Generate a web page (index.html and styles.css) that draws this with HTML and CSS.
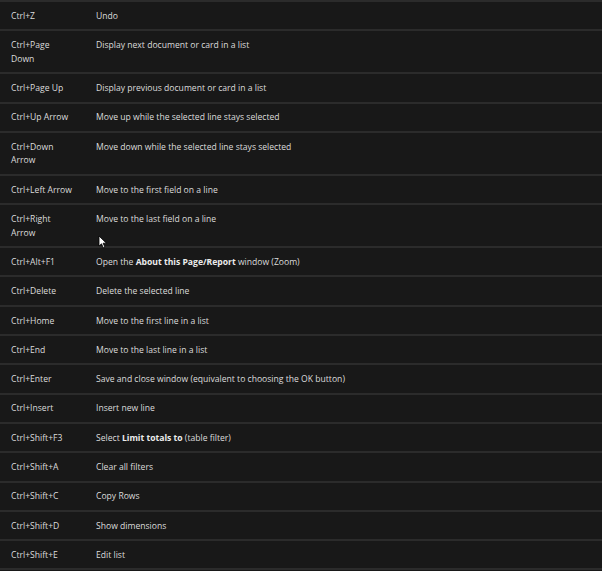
FILE: index.html
```html
<!DOCTYPE html>
<html lang="en">
<head>
<meta charset="utf-8">
<title>Keyboard shortcuts</title>
<link rel="stylesheet" href="styles.css">
</head>
<body>
<div class="page">
<table class="shortcuts">
<tbody>
<tr><td class="key">Ctrl+Z</td><td class="desc">Undo</td></tr>
<tr><td class="key">Ctrl+Page<br>Down</td><td class="desc">Display next document or card in a list</td></tr>
<tr><td class="key">Ctrl+Page Up</td><td class="desc">Display previous document or card in a list</td></tr>
<tr><td class="key">Ctrl+Up Arrow</td><td class="desc">Move up while the selected line stays selected</td></tr>
<tr><td class="key">Ctrl+Down<br>Arrow</td><td class="desc">Move down while the selected line stays selected</td></tr>
<tr><td class="key">Ctrl+Left Arrow</td><td class="desc">Move to the first field on a line</td></tr>
<tr><td class="key">Ctrl+Right<br>Arrow</td><td class="desc">Move to the last field on a line</td></tr>
<tr><td class="key">Ctrl+Alt+F1</td><td class="desc">Open the <b>About this Page/Report</b> window (Zoom)</td></tr>
<tr><td class="key">Ctrl+Delete</td><td class="desc">Delete the selected line</td></tr>
<tr><td class="key">Ctrl+Home</td><td class="desc">Move to the first line in a list</td></tr>
<tr><td class="key">Ctrl+End</td><td class="desc">Move to the last line in a list</td></tr>
<tr><td class="key">Ctrl+Enter</td><td class="desc">Save and close window (equivalent to choosing the OK button)</td></tr>
<tr><td class="key">Ctrl+Insert</td><td class="desc">Insert new line</td></tr>
<tr><td class="key">Ctrl+Shift+F3</td><td class="desc">Select <b>Limit totals to</b> (table filter)</td></tr>
<tr><td class="key">Ctrl+Shift+A</td><td class="desc">Clear all filters</td></tr>
<tr><td class="key">Ctrl+Shift+C</td><td class="desc">Copy Rows</td></tr>
<tr><td class="key">Ctrl+Shift+D</td><td class="desc">Show dimensions</td></tr>
<tr><td class="key">Ctrl+Shift+E</td><td class="desc">Edit list</td></tr>
</tbody>
</table>
<svg class="cursor" width="10" height="14" viewBox="0 0 10 14"><path d="M1 1 L1 11 L3.5 8.8 L5.3 12.8 L6.9 12.1 L5.1 8.2 L8.4 8.2 Z" fill="#ffffff" stroke="#000000" stroke-width="0.8"/></svg>
</div>
</body>
</html>
```

FILE: styles.css
```css
html, body {
  margin: 0;
  padding: 0;
  background: #181818;
}
.page {
  position: relative;
  width: 602px;
  height: 571px;
  overflow: hidden;
}
.shortcuts {
  width: 100%;
  border-collapse: collapse;
  border-top: 2px solid #2b2b2b;
  font-family: "Open Sans", "Noto Sans", sans-serif;
  font-size: 8.6px;
  line-height: 13.7px;
  color: #dcdcdc;
}
.shortcuts td {
  padding: 7.8px 0 5.8px;
  vertical-align: top;
  border-bottom: 2px solid #2b2b2b;
}
.shortcuts .key {
  width: 85px;
  padding-left: 11px;
}
.shortcuts b {
  font-weight: 700;
  color: #ececec;
}
.cursor {
  position: absolute;
  left: 98px;
  top: 235px;
}
```
